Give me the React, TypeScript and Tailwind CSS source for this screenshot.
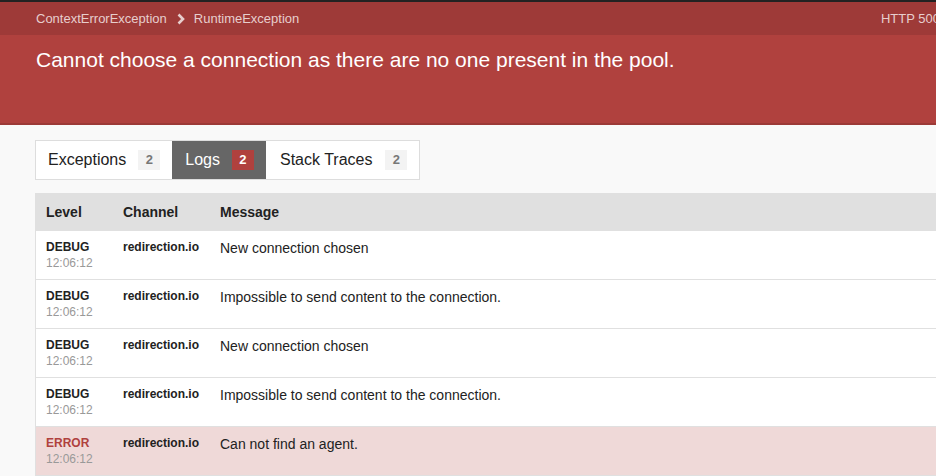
import React from "react";

const rows = [
  { level: "DEBUG", msg: "New connection chosen" },
  { level: "DEBUG", msg: "Impossible to send content to the connection." },
  { level: "DEBUG", msg: "New connection chosen" },
  { level: "DEBUG", msg: "Impossible to send content to the connection." },
  { level: "ERROR", msg: "Can not find an agent." },
];

function Chevron() {
  return (
    <svg width="8" height="12" viewBox="0 0 8 12" className="ml-[10px] mr-[9px]">
      <polyline points="1.5,1.5 6,6 1.5,10.5" fill="none" stroke="#e7cecd" strokeWidth="2.6" strokeLinecap="butt" strokeLinejoin="miter" />
    </svg>
  );
}

function Tab({ label, active, cls }: { label: string; active?: boolean; cls: string }) {
  return (
    <div
      className={
        "flex items-center h-full text-[16px] " +
        cls +
        " " +
        (active ? "bg-[#666666] text-white" : "bg-white text-[#222222]")
      }
    >
      <span>{label}</span>
      <span
        className={
          "flex items-center justify-center w-[22px] h-[20px] text-[13px] font-bold " +
          (active ? "bg-[#b0413e] text-white" : "bg-[#f3f3f3] text-[#777777]")
        }
      >
        2
      </span>
    </div>
  );
}

export default function App() {
  return (
    <div
      className="w-[936px] h-[476px] overflow-hidden bg-[#f9f9f9] text-[#222222]"
      style={{ fontFamily: '"Liberation Sans", Arial, Helvetica, sans-serif' }}
    >
      <div className="w-[976px]">
        <div className="h-[2px] bg-[#222222]" />
        <div className="h-[33px] bg-[#9e3a38]">
          <div className="h-full px-[36px] flex items-center justify-between text-[13px] text-[#e7cecd]">
            <div className="flex items-center">
              <span>ContextErrorException</span>
              <Chevron />
              <span>RuntimeException</span>
            </div>
            <span>HTTP 500</span>
          </div>
        </div>
        <div className="h-[90px] bg-[#b0413e] border-b-2 border-[#9c3a37]">
          <div className="px-[36px] pt-[11px]">
            <h1 className="text-[21px] leading-[28px] text-white font-normal">
              Cannot choose a connection as there are no one present in the pool.
            </h1>
          </div>
        </div>

        <div className="px-[35px] pt-[15px]">
          <div className="flex">
            <div className="flex h-[40px] border border-[#dddddd] bg-white">
              <Tab label="Exceptions" cls="pl-3 pr-3 gap-3" />
              <Tab label="Logs" active cls="pl-[13px] pr-3 gap-3" />
              <Tab label="Stack Traces" cls="pl-[14px] pr-3 gap-[13px]" />
            </div>
          </div>

          <div className="mt-[13px] bg-white border border-[#e0e0e0]">
            <div className="grid grid-cols-[77px_97px_1fr] bg-[#e0e0e0] h-[37px] items-center text-[14px] font-bold text-[#222222]">
              <div className="pl-[10px]">Level</div>
              <div className="pl-[10px]">Channel</div>
              <div className="pl-[10px]">Message</div>
            </div>
            {rows.map((r, i) => {
              const err = r.level === "ERROR";
              return (
                <div
                  key={i}
                  className={
                    "grid grid-cols-[77px_97px_1fr] border-b border-[#e0e0e0] py-[8px] " +
                    (err ? "bg-[#efd9d8]" : "bg-white")
                  }
                >
                  <div className="pl-[10px] text-[12px] leading-4">
                    <div className={"font-bold " + (err ? "text-[#b0413e]" : "text-[#222222]")}>{r.level}</div>
                    <div className="text-[#999999]">12:06:12</div>
                  </div>
                  <div className="pl-[10px] text-[12px] leading-4 font-bold">redirection.io</div>
                  <div className="pl-[10px] text-[14px] leading-[18px]">{r.msg}</div>
                </div>
              );
            })}
          </div>
        </div>
      </div>
    </div>
  );
}
